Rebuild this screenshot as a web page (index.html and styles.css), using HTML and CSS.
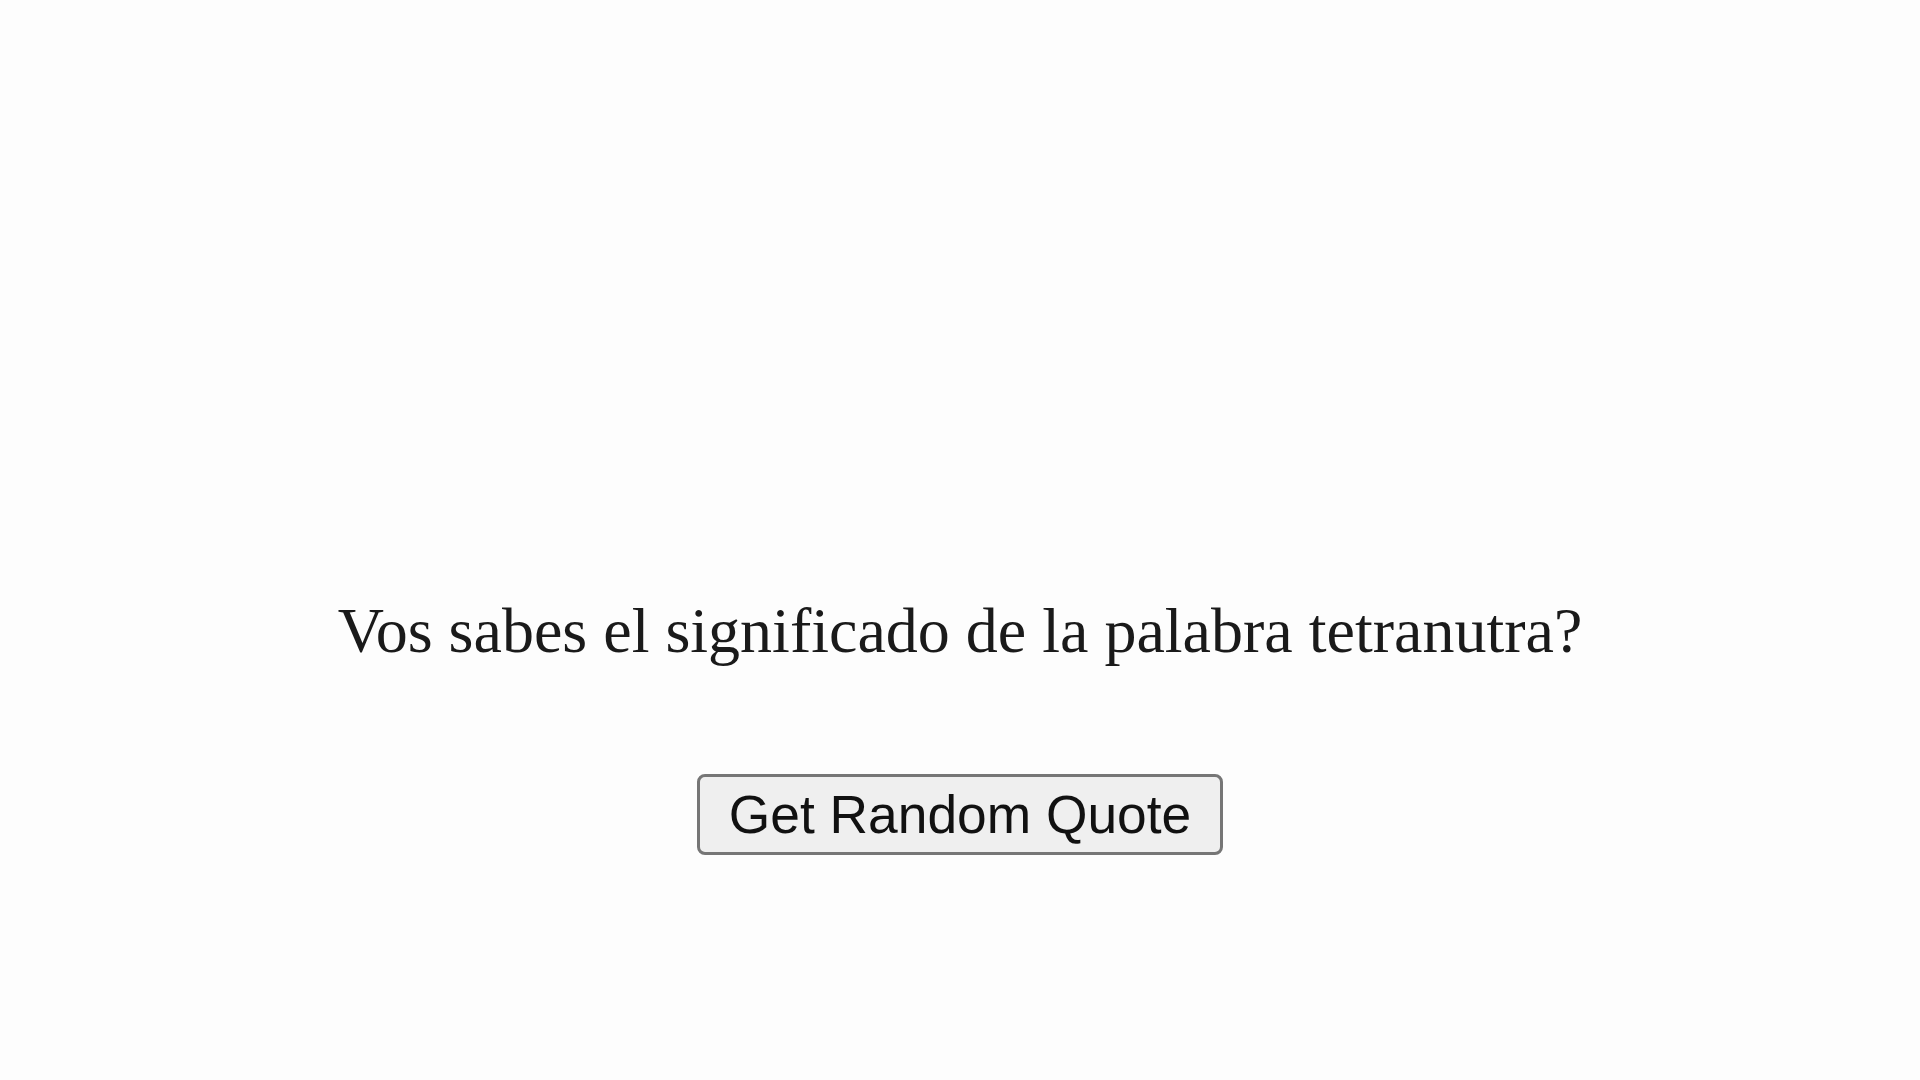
FILE: index.html
```html
<!DOCTYPE html>
<html lang="es">
<head>
<meta charset="utf-8">
<title>Random Quote</title>
<link rel="stylesheet" href="styles.css">
</head>
<body>
<main class="quote-box">
  <p class="quote-text">Vos sabes el significado de la palabra tetranutra?</p>
  <button class="quote-button" type="button">Get Random Quote</button>
</main>
</body>
</html>
```
FILE: styles.css
```css
html, body {
  margin: 0;
  padding: 0;
  background: #fdfdfd;
}
.quote-box {
  display: flex;
  flex-direction: column;
  align-items: center;
  padding-top: 594px;
}
.quote-text {
  margin: 0;
  font-family: "Liberation Serif", "Times New Roman", serif;
  font-size: 64px;
  color: #1a1a1a;
}
.quote-button {
  margin-top: 106px;
  font-family: "Liberation Sans", Arial, sans-serif;
  font-size: 53.33px;
  color: #111;
  background: #efefef;
  border: 3px solid #767676;
  border-radius: 8px;
  padding: 7px 29px;
  line-height: normal;
}
```
